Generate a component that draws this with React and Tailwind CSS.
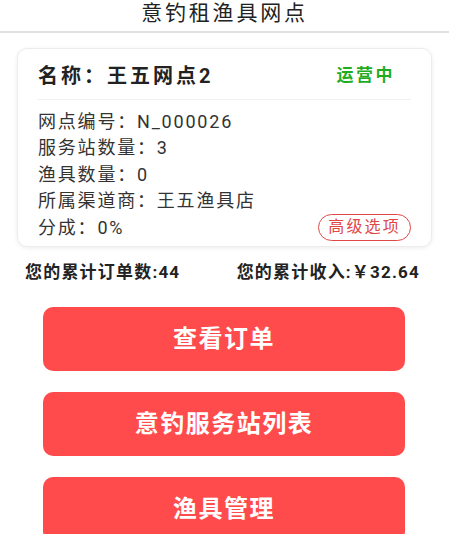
const cjk = { fontFamily: 'Roboto, "Noto Sans CJK SC", "Noto Sans", sans-serif' }

const ROWS = [
  ['网点编号', 'N_000026'],
  ['服务站数量', '3'],
  ['渔具数量', '0'],
  ['所属渠道商', '王五渔具店'],
]

const BUTTONS = ['查看订单', '意钓服务站列表', '渔具管理']

export default function App() {
  return (
    <div className="w-[449px] h-[534px] overflow-hidden bg-white text-[#333]" style={cjk}>
      {/* ── Header ── */}
      <div className="h-[33px] border-b-2 border-[#e2e2e2] flex items-start justify-center pt-[2px]">
        <h1 className="text-[21px] leading-[23px] tracking-[2.8px] text-[#222]">意钓租渔具网点</h1>
      </div>

      {/* ── Card ── */}
      <div className="mx-[17px] mt-[15px] h-[199px] rounded-[10px] border border-[#ececec] shadow-[0_1px_4px_rgba(0,0,0,0.08)] px-[20px]">
        <div className="h-[51px] flex items-center justify-between border-b border-[#f0f0f0] pt-[4px]">
          <span className="text-[20px] font-bold tracking-[3px] text-[#222]">名称：王五网点2</span>
          <span className="text-[17px] font-bold tracking-[2.5px] text-[#1fad1f] mr-[16px]">运营中</span>
        </div>
        <div className="pt-[8px]">
          {ROWS.map(([k, v]) => (
            <div key={k} className="h-[26.5px] flex items-center text-[18px] tracking-[1.8px] text-[#333]">
              {k}：{v}
            </div>
          ))}
          <div className="h-[26.5px] flex items-center justify-between text-[18px] tracking-[1.8px] text-[#333]">
            <span>分成：0%</span>
            <span className="h-[27px] px-[9px] rounded-full border-[1.5px] border-[#e04848] text-[#e04848] text-[16px] tracking-[2.2px] flex items-center leading-none">
              高级选项
            </span>
          </div>
        </div>
      </div>

      {/* ── Stats ── */}
      <div className="mt-[12px] pl-[25px] pr-[29px] flex justify-between text-[17px] leading-[26px] font-bold tracking-[1.2px] text-[#222]">
        <span>您的累计订单数:44</span>
        <span>您的累计收入:￥32.64</span>
      </div>

      {/* ── Actions ── */}
      <div className="mt-[22px] flex flex-col gap-[21px] px-[43px] pr-[44px]">
        {BUTTONS.map((b) => (
          <button
            key={b}
            type="button"
            className="h-[64px] rounded-[10px] bg-[#ff4b4b] text-white text-[24px] font-bold tracking-[1.5px] flex items-center justify-center"
          >
            {b}
          </button>
        ))}
      </div>
    </div>
  )
}
